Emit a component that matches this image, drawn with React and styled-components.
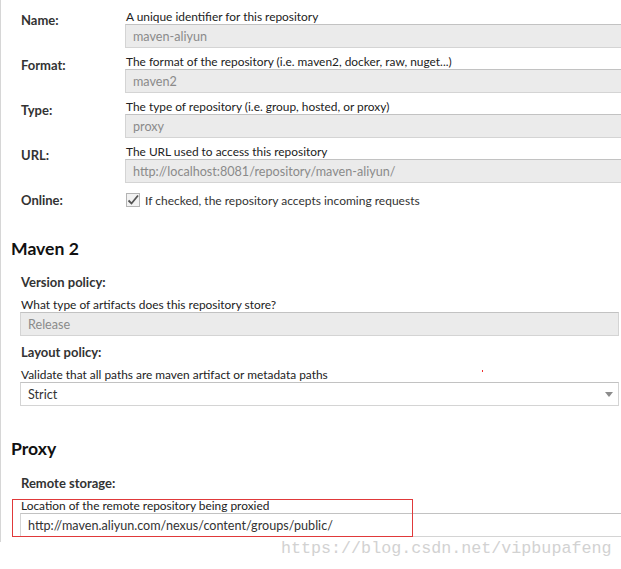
import React from "react";
import styled, { createGlobalStyle } from "styled-components";

const Global = createGlobalStyle`
  html, body { margin: 0; padding: 0; background: #fff; }
  body {
    font-family: Lato, "Liberation Sans", Arial, sans-serif;
    color: #333;
    font-size: 12px;
    overflow: hidden;
  }
`;

const Page = styled.div`
  position: relative;
  width: 621px;
  height: 569px;
  overflow: hidden;
`;

const Panel = styled.div`
  border-left: 1px solid #d6d6d6;
  height: 542px;
  box-sizing: border-box;
  padding-top: 9px;
`;

const FieldGrid = styled.div`
  display: grid;
  grid-template-columns: 104px 1fr;
  padding-left: 20px;
  row-gap: 6px;
`;

const Label = styled.div`
  font-weight: 700;
  font-size: 13px;
  line-height: 15px;
  padding-top: ${(p) => p.$pt ?? 4}px;
  color: #333;
`;

const FieldBody = styled.div`
  display: flex;
  flex-direction: column;
  min-width: 0;
`;

const Help = styled.div`
  font-size: 11.9px;
  line-height: 15px;
  color: #222;
  white-space: nowrap;
  padding-left: 1px;
`;

const Input = styled.div`
  box-sizing: border-box;
  height: 24px;
  display: flex;
  align-items: center;
  padding-left: 7px;
  font-size: 12.6px;
  white-space: nowrap;
  color: ${(p) => (p.$disabled ? "#8a8a8a" : "#333")};
  background: ${(p) => (p.$disabled ? "#ebebeb" : "#fff")};
  border: 1px solid #d4d4d4;
  border-top-color: #c2c2c2;
  width: ${(p) => p.$width || "calc(100% + 20px)"};
  position: relative;
`;

const CheckRow = styled.div`
  display: flex;
  align-items: center;
  gap: 5px;
  height: 22px;
  font-size: 12px;
`;

const Box = styled.span`
  box-sizing: border-box;
  width: 14px;
  height: 14px;
  border: 1px solid #b4b4b4;
  background: #f2f2f2;
  display: inline-flex;
  align-items: center;
  justify-content: center;
  margin-left: 1px;
`;

const Heading = styled.h2`
  margin: 0;
  padding-left: 10px;
  font-size: 17.6px;
  font-weight: 700;
  line-height: 20px;
  color: #111;
  margin-top: ${(p) => p.$mt}px;
`;

const Section = styled.div`
  padding-left: 19px;
  display: flex;
  flex-direction: column;
`;

const SubLabel = styled.div`
  font-weight: 700;
  font-size: 13px;
  line-height: 15px;
  padding-left: 1px;
  margin-top: ${(p) => p.$mt}px;
  margin-bottom: ${(p) => p.$mb ?? 7}px;
`;

const Arrow = styled.span`
  position: absolute;
  right: 5px;
  top: 9px;
  width: 0;
  height: 0;
  border-left: 4px solid transparent;
  border-right: 4px solid transparent;
  border-top: 5px solid #8c8c8c;
`;

const RemoteWrap = styled.div`
  position: relative;
`;

const RedBox = styled.div`
  position: absolute;
  left: -8px;
  top: 1px;
  width: 401px;
  height: 38px;
  box-sizing: border-box;
  border: 1px solid #e0393a;
  pointer-events: none;
`;

const Watermark = styled.div`
  position: absolute;
  left: 281px;
  top: 539px;
  font-family: "Liberation Mono", "DejaVu Sans Mono", monospace;
  font-size: 16.7px;
  line-height: 20px;
  color: #d2d2d2;
  white-space: nowrap;
`;

const Dot = styled.span`
  position: absolute;
  left: 482px;
  top: 370px;
  width: 1px;
  height: 2px;
  background: #f03030;
`;

const fields = [
  { label: "Name:", help: "A unique identifier for this repository", value: "maven-aliyun" },
  { label: "Format:", help: "The format of the repository (i.e. maven2, docker, raw, nuget...)", value: "maven2" },
  { label: "Type:", help: "The type of repository (i.e. group, hosted, or proxy)", value: "proxy" },
  { label: "URL:", help: "The URL used to access this repository", value: "http://localhost:8081/repository/maven-aliyun/" },
];

function Check() {
  return (
    <Box>
      <svg width="12" height="12" viewBox="0 0 12 12">
        <path d="M1.5 6.5 L4.5 9.5 L11 1.5" fill="none" stroke="#555" strokeWidth="1.8" />
      </svg>
    </Box>
  );
}

export default function App() {
  return (
    <Page>
      <Global />
      <Panel>
        <FieldGrid>
          {fields.map((f) => (
            <React.Fragment key={f.label}>
              <Label>{f.label}</Label>
              <FieldBody>
                <Help>{f.help}</Help>
                <Input $disabled>{f.value}</Input>
              </FieldBody>
            </React.Fragment>
          ))}
          <Label $pt={4}>Online:</Label>
          <CheckRow>
            <Check />
            <span>If checked, the repository accepts incoming requests</span>
          </CheckRow>
        </FieldGrid>

        <Heading $mt={28}>Maven 2</Heading>
        <Section>
          <SubLabel $mt={16}>Version policy:</SubLabel>
          <Help>What type of artifacts does this repository store?</Help>
          <Input $disabled $width="599px">Release</Input>
          <SubLabel $mt={9}>Layout policy:</SubLabel>
          <Help>Validate that all paths are maven artifact or metadata paths</Help>
          <Input $width="599px">
            Strict
            <Arrow />
          </Input>
        </Section>

        <Heading $mt={33}>Proxy</Heading>
        <Section>
          <SubLabel $mt={17}>Remote storage:</SubLabel>
          <RemoteWrap>
            <Help>Location of the remote repository being proxied</Help>
            <Input $width="605px">http://maven.aliyun.com/nexus/content/groups/public/</Input>
            <RedBox />
          </RemoteWrap>
        </Section>
      </Panel>
      <Dot />
      <Watermark>https://blog.csdn.net/vipbupafeng</Watermark>
    </Page>
  );
}
